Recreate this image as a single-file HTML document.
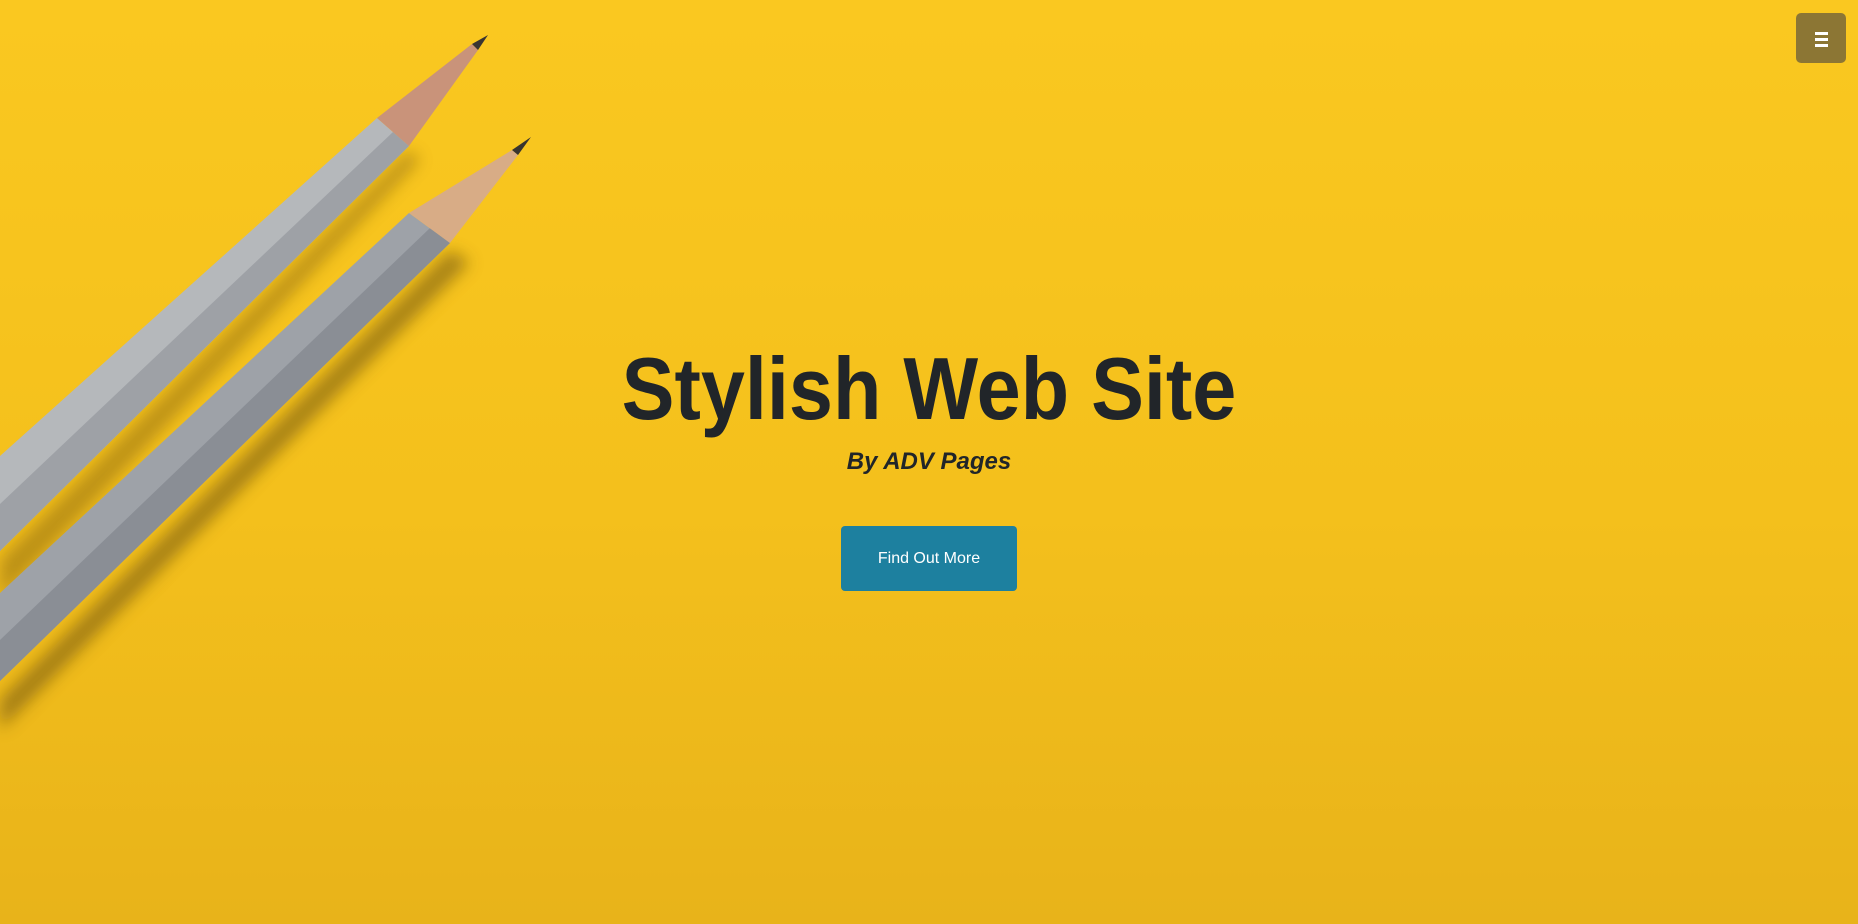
<!DOCTYPE html>
<html><head><meta charset="utf-8"><style>
html,body{margin:0;padding:0;width:1858px;height:924px;overflow:hidden}
body{background:linear-gradient(180deg,#fac820 0%,#f4c01c 55%,#e8b31a 100%);font-family:"Liberation Sans",sans-serif;position:relative}
svg.p{position:absolute;left:0;top:0}
.menu{position:absolute;left:1796px;top:13px;width:50px;height:50px;border-radius:5px;background:#8c7634}
.menu i{position:absolute;left:19px;width:13px;height:3px;background:#fff}
h1{position:absolute;left:0;width:1858px;top:336px;margin:0;text-align:center;font-size:88px;line-height:106px;font-weight:bold;color:#212529;transform:scaleX(.9)}
h3{position:absolute;left:0;width:1858px;top:446px;margin:0;text-align:center;font-size:24px;line-height:32px;font-weight:bold;font-style:italic;color:#212529}
.btn{position:absolute;left:841px;top:526px;width:176px;height:65px;background:#1d809f;border-radius:4px;color:#fff;font-size:16px;line-height:65px;text-align:center}
</style></head><body>
<svg class="p" width="700" height="924" viewBox="0 0 700 924">
<defs><filter id="b" x="-50%" y="-50%" width="200%" height="200%"><feGaussianBlur stdDeviation="8"/></filter></defs>
<polygon points="450,250 0,700 0,730 470,262" fill="#5a4208" opacity=".5" filter="url(#b)"/>
<polygon points="409,150 0,560 0,600 420,160" fill="#6a4e08" opacity=".4" filter="url(#b)"/>
<!-- pencil 1 -->
<polygon points="377,118 409,146 0,551 0,456" fill="#b5b8bb"/>
<polygon points="393,132 409,146 0,551 0,504" fill="#9ea1a6"/>
<polygon points="377,118 409,146 478,50 472,44" fill="#c9937a"/>
<polygon points="472,44 478,50 488,35" fill="#3a3532"/>
<!-- pencil 2 -->
<polygon points="409,213 450,243 0,681 0,593" fill="#9ea2a8"/>
<polygon points="430,228 450,243 0,681 0,640" fill="#8a8e95"/>
<polygon points="409,213 450,243 518,155 512,150" fill="#d8ac86"/>
<polygon points="512,150 518,155 531,137" fill="#38342f"/>
</svg>
<div class="menu"><i style="top:19px"></i><i style="top:25px"></i><i style="top:31px"></i></div>
<h1>Stylish Web Site</h1>
<h3>By ADV Pages</h3>
<div class="btn">Find Out More</div>
</body></html>
